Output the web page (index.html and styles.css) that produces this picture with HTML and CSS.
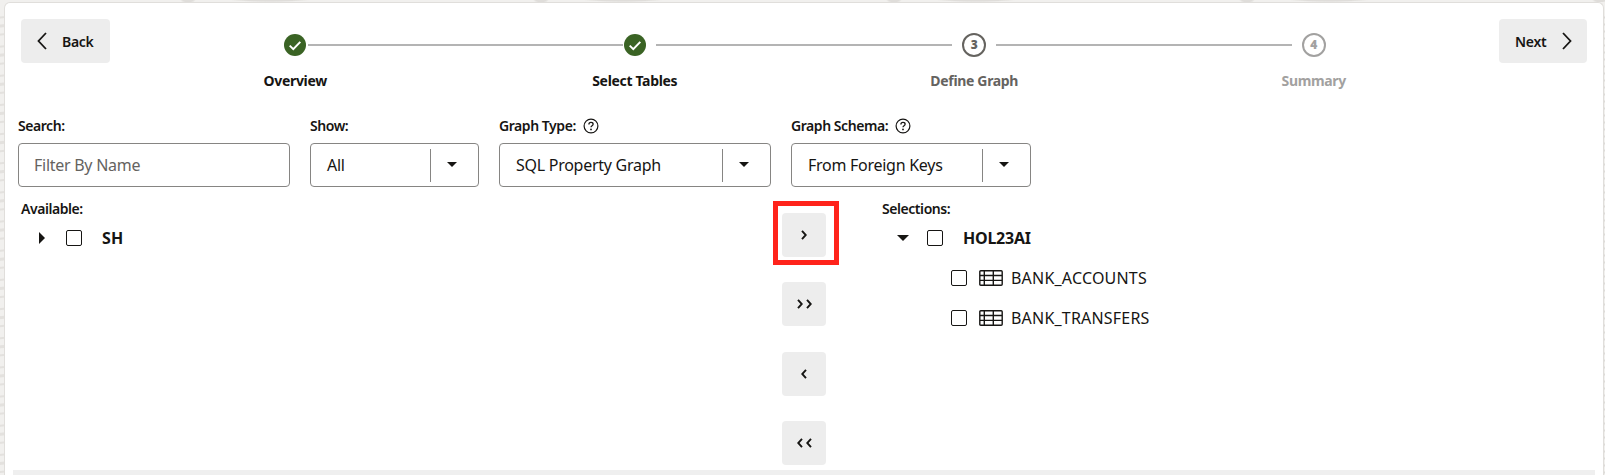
FILE: index.html
```html
<!DOCTYPE html>
<html lang="en">
<head>
<meta charset="utf-8">
<title>Create Graph</title>
<link rel="stylesheet" href="styles.css">
</head>
<body>
<svg class="symbols" width="0" height="0">
  <symbol id="check" viewBox="0 0 22 22"><circle cx="11" cy="11" r="11" fill="#3a6324"/><path d="M5.700 11.600l3.600 3.500 7-7.200" fill="none" stroke="#fff" stroke-width="2"/></symbol>
  <symbol id="help" viewBox="0 0 16 16"><circle cx="8" cy="8" r="6.900" fill="none" stroke="#161513" stroke-width="1.200"/><path d="M5.900 6.400C5.900 3.700 10.100 3.900 10.100 6.200 10.100 7.800 8 7.600 8 9.300" fill="none" stroke="#161513" stroke-width="1.300"/><circle cx="8" cy="11.400" r=".9" fill="#161513"/></symbol>
  <symbol id="table" viewBox="0 0 24 16"><path d="M1.800.7h20.400q1 0 1 1v12.600q0 1-1 1H1.800q-1 0-1-1V1.700q0-1 1-1zM.8 5.500h22.400M.8 10.400h22.400M5.300.7v14.600M14.300.7v14.600" fill="none" stroke="#161513" stroke-width="1.400"/></symbol>
  <symbol id="chev" viewBox="0 0 6 10"><path d="M1 .8L4.800 5 1 9.200" fill="none" stroke="#161513" stroke-width="1.900"/></symbol>
</svg>
<main class="panel">
  <header class="top">
    <button class="nav back"><svg width="10" height="18" viewBox="0 0 10 18"><path d="M9 1L1.500 9 9 17" fill="none" stroke="#161513" stroke-width="1.800"/></svg><span>Back</span></button>
    <ol class="train">
      <li class="step done"><span class="mark"><svg width="22" height="22"><use href="#check"/></svg></span><span class="name">Overview</span></li>
      <li class="step done"><span class="mark"><svg width="22" height="22"><use href="#check"/></svg></span><span class="name">Select Tables</span></li>
      <li class="step current"><span class="mark"><b class="num">3</b></span><span class="name">Define Graph</span></li>
      <li class="step future"><span class="mark"><b class="num">4</b></span><span class="name">Summary</span></li>
    </ol>
    <button class="nav next"><span>Next</span><svg width="10" height="18" viewBox="0 0 10 18"><path d="M1 1l7.500 8L1 17" fill="none" stroke="#161513" stroke-width="1.800"/></svg></button>
  </header>
  <section class="filters">
    <div class="field search"><label class="label">Search:</label><div class="box"><span class="value hint">Filter By Name</span></div></div>
    <div class="field show"><label class="label">Show:</label><div class="box"><span class="value">All</span><span class="drop"><i class="down"></i></span></div></div>
    <div class="field type"><label class="label"><span>Graph Type:</span><svg width="16" height="16"><use href="#help"/></svg></label><div class="box"><span class="value">SQL Property Graph</span><span class="drop"><i class="down"></i></span></div></div>
    <div class="field schema"><label class="label"><span>Graph Schema:</span><svg width="16" height="16"><use href="#help"/></svg></label><div class="box"><span class="value">From Foreign Keys</span><span class="drop"><i class="down"></i></span></div></div>
  </section>
  <section class="shuttle">
    <div class="available">
      <h2 class="label">Available:</h2>
      <div class="row root"><span class="twist"><i class="right"></i></span><span class="check"></span><b class="schema-name sh">SH</b></div>
    </div>
    <div class="moves">
      <button class="move marked"><svg width="6" height="10"><use href="#chev"/></svg></button>
      <button class="move"><svg width="6" height="10"><use href="#chev"/></svg><svg width="6" height="10"><use href="#chev"/></svg></button>
      <button class="move left"><svg width="6" height="10"><use href="#chev"/></svg></button>
      <button class="move left"><svg width="6" height="10"><use href="#chev"/></svg><svg width="6" height="10"><use href="#chev"/></svg></button>
    </div>
    <div class="selections">
      <h2 class="label">Selections:</h2>
      <div class="row root"><span class="twist"><i class="down big"></i></span><span class="check"></span><b class="schema-name">HOL23AI</b></div>
      <div class="row leaf"><span class="check"></span><svg width="24" height="16"><use href="#table"/></svg><span class="item">BANK_ACCOUNTS</span></div>
      <div class="row leaf"><span class="check"></span><svg width="24" height="16"><use href="#table"/></svg><span class="item">BANK_TRANSFERS</span></div>
    </div>
  </section>
  <footer class="bar"></footer>
</main>
</body>
</html>
```
FILE: styles.css
```css
* { box-sizing: border-box; }
html { height: 100%; overflow: hidden; }
body {
  margin: 0;
  height: 475px;
  padding: 2px 1px 0 4px;
  overflow: hidden;
  color: #161513;
  font: 16px/24px "Noto Sans", "Open Sans", sans-serif;
  background:
    radial-gradient(ellipse 40px 2px at 270px 0, #dfddda 60%, transparent) 0 0 / 353px 2px repeat-x,
    radial-gradient(ellipse 8px 3px at 188px 0, #dfddda 60%, transparent) 0 0 / 353px 2px repeat-x,
    repeating-linear-gradient(174deg, transparent 0 4px, #e3e1de 5px 6px, transparent 7px 12px, #e3e1de 13px 15px, transparent 16px 21px, #e3e1de 22px 23px, transparent 24px 29px) 0 12px / 4px 100% no-repeat,
    repeating-linear-gradient(180deg, transparent 0 4px, #dddbd8 5px 6px, transparent 7px) 100% 12px / 2px 100% no-repeat,
    #f1f0ee;
}
.symbols { position: absolute; }
.panel {
  display: flex;
  flex-direction: column;
  height: 473px;
  border: 1px solid #e0dedb;
  border-bottom: 0;
  border-radius: 6px 6px 0 0;
  background: #fff;
}
.top { display: flex; height: 111px; padding: 16px 16px 0 16px; justify-content: space-between; }
button { font: inherit; color: inherit; border: 0; padding: 0; border-radius: 4px; background: #ededed; }
.nav { display: flex; align-items: center; height: 44px; font-size: 14px; font-weight: 600; letter-spacing: -0.3px; }
.nav span { position: relative; top: 1px; }
.nav svg { margin-bottom: 1px; }
.back { width: 89px; padding-left: 16px; gap: 15px; }
.next { width: 88px; padding-left: 16px; gap: 16px; }
.train { display: flex; width: 1358px; margin: 0; padding: 0; list-style: none; }
.step { position: relative; width: 339.5px; display: flex; flex-direction: column; align-items: center; font-size: 14px; font-weight: 700; }
.mark { display: flex; align-items: center; justify-content: center; height: 24px; margin-top: 14px; }
.name { margin-top: 13px; line-height: 22px; letter-spacing: -0.33px; white-space: nowrap; }
.step:not(:last-child)::after { content: ""; position: absolute; left: 191px; top: 25px; width: 296px; height: 2px; background: #b4b4b4; }
.step:first-child::after { left: 182px; width: 315px; }
.num { display: flex; align-items: center; justify-content: center; width: 24px; height: 24px; border: 2px solid; border-radius: 50%; font-size: 12px; letter-spacing: 0; }
.current { color: #65635f; }
.future { color: #a2a1a0; }
.label { display: flex; align-items: center; gap: 7px; margin: 0; height: 24px; font-size: 14px; line-height: 24px; font-weight: 600; letter-spacing: -0.44px; white-space: nowrap; }
.filters { display: flex; gap: 20px; height: 73px; padding-left: 13px; }
.field .label { margin-bottom: 5px; }
.search, .type { width: 272px; }
.show { width: 169px; }
.schema { width: 240px; }
.box { display: flex; align-items: center; justify-content: space-between; height: 44px; border: 1px solid #868583; border-radius: 4px; }
.value { padding-left: 16px; letter-spacing: -0.27px; }
.hint { padding-left: 15px; color: #65635f; }
.drop { display: flex; align-items: center; justify-content: center; width: 48px; height: 33px; padding: 0 5px 2px 0; border-left: 1px solid #868583; }
.down { width: 0; height: 0; border: 5px solid transparent; border-top-color: #161513; border-bottom: 0; }
.down.big { border-width: 6px 6px 0; }
.right { width: 0; height: 0; border: 6px solid transparent; border-left: 6px solid #161513; border-right: 0; }
.shuttle { display: flex; height: 283px; padding-top: 10px; }
.available { width: 777px; padding-left: 16px; }
.moves { display: flex; flex-direction: column; width: 44px; padding-top: 16px; gap: 25.300px; }
.move { position: relative; display: flex; align-items: center; justify-content: center; gap: 3px; height: 44px; flex: none; }
.left svg { transform: scaleX(-1); }
.marked::after { content: ""; position: absolute; inset: -12px -13px -8px -9px; border: 5px solid #ff231b; }
.selections { padding-left: 56px; }
.row { display: flex; align-items: center; height: 40px; }
.root { margin-top: -3px; }
.twist { width: 45px; display: flex; justify-content: center; padding-right: 3px; }
.check { width: 16px; height: 16px; border: 1px solid #161513; border-radius: 2px; }
.schema-name { margin-left: 20px; letter-spacing: -0.25px; }
.schema-name.sh { letter-spacing: 0.3px; }
.leaf { padding-left: 69px; }
.leaf svg { margin-left: 12px; }
.item { margin-left: 8px; letter-spacing: 0.2px; }
.bar { height: 5px; margin: 0 8px; background: #efefef; }
```
